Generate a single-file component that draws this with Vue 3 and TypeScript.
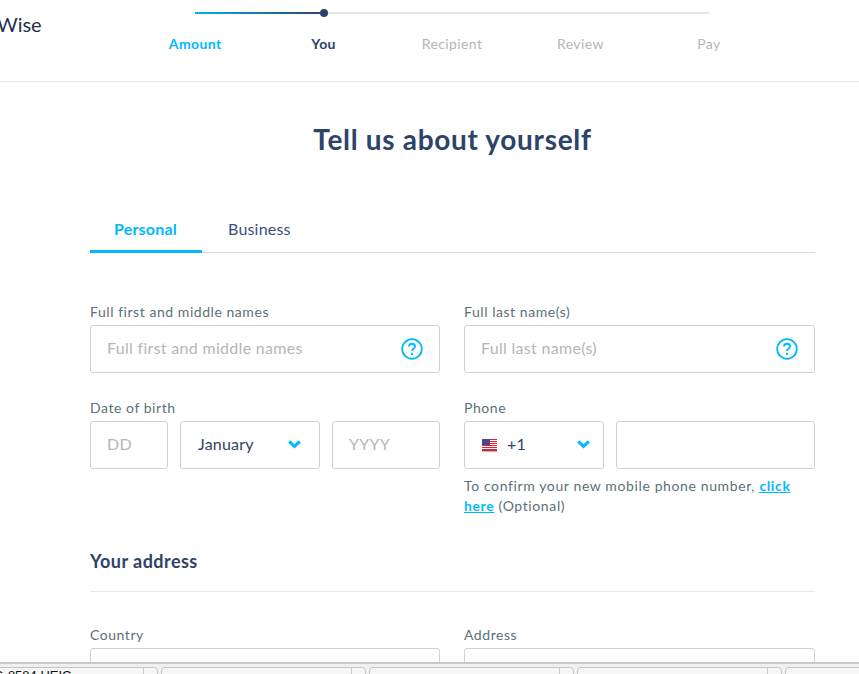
<script setup lang="ts">
const steps = [
  { label: 'Amount', state: 'done' },
  { label: 'You', state: 'active' },
  { label: 'Recipient', state: '' },
  { label: 'Review', state: '' },
  { label: 'Pay', state: '' },
]
const downloads = [0, 1, 2, 3, 4]
const stripes = [0, 1, 2, 3, 4, 5]
</script>

<template>
  <div class="page">
    <header class="top">
      <div class="logo">Wise</div>
      <div class="stepper">
        <div class="track">
          <div class="progress"></div>
          <div class="dot"></div>
        </div>
        <div class="labels">
          <span v-for="s in steps" :key="s.label" class="step" :class="s.state">{{ s.label }}</span>
        </div>
      </div>
    </header>

    <main class="content">
      <h1>Tell us about yourself</h1>
      <nav class="tabs">
        <span class="tab on">Personal</span>
        <span class="tab">Business</span>
      </nav>

      <div class="row first">
        <div class="field">
          <label>Full first and middle names</label>
          <div class="box hinted">
            <span class="ph">Full first and middle names</span>
            <svg class="help" width="22" height="22" viewBox="0 0 22 22" fill="none">
              <circle cx="11" cy="11" r="9.8" stroke="#00b9ff" stroke-width="1.8" />
              <path d="M8 8.6c0-1.8 1.3-2.9 3-2.9s3 1.1 3 2.7c0 2.3-3 2.4-3 4.6" stroke="#00b9ff" stroke-width="1.9" fill="none" />
              <circle cx="11" cy="15.9" r="1.2" fill="#00b9ff" />
            </svg>
          </div>
        </div>
        <div class="field">
          <label>Full last name(s)</label>
          <div class="box hinted">
            <span class="ph">Full last name(s)</span>
            <svg class="help" width="22" height="22" viewBox="0 0 22 22" fill="none">
              <circle cx="11" cy="11" r="9.8" stroke="#00b9ff" stroke-width="1.8" />
              <path d="M8 8.6c0-1.8 1.3-2.9 3-2.9s3 1.1 3 2.7c0 2.3-3 2.4-3 4.6" stroke="#00b9ff" stroke-width="1.9" fill="none" />
              <circle cx="11" cy="15.9" r="1.2" fill="#00b9ff" />
            </svg>
          </div>
        </div>
      </div>

      <div class="row second">
        <div class="field">
          <label>Date of birth</label>
          <div class="dob">
            <div class="box small"><span class="ph">DD</span></div>
            <div class="box select month">
              <span class="val">January</span>
              <svg class="chev" width="13" height="9" viewBox="0 0 13 9"><path d="M1.2 1.4 6.5 6.4l5.3-5" fill="none" stroke="#00b9ff" stroke-width="3" /></svg>
            </div>
            <div class="box small"><span class="ph">YYYY</span></div>
          </div>
        </div>
        <div class="field">
          <label>Phone</label>
          <div class="phone">
            <div class="box select code">
              <span class="flagval">
                <svg class="flag" width="15" height="12" viewBox="0 0 15 12">
                  <rect width="15" height="12" fill="#fff" />
                  <rect v-for="n in stripes" :key="n" :y="n * 2" width="15" height="1" fill="#e0202c" />
                  <rect y="11" width="15" height="1" fill="#e0202c" />
                  <rect width="8" height="6" fill="#47478f" />
                </svg>
                <span class="val">+1</span>
              </span>
              <svg class="chev" width="13" height="9" viewBox="0 0 13 9"><path d="M1.2 1.4 6.5 6.4l5.3-5" fill="none" stroke="#00b9ff" stroke-width="3" /></svg>
            </div>
            <div class="box grow"></div>
          </div>
          <p class="note">To confirm your new mobile phone number, <a>click here</a> (Optional)</p>
        </div>
      </div>

      <h2>Your address</h2>
      <div class="row third">
        <div class="field">
          <label>Country</label>
          <div class="box"></div>
        </div>
        <div class="field">
          <label>Address</label>
          <div class="box"></div>
        </div>
      </div>
    </main>

    <div class="downloads">
      <div v-for="i in downloads" :key="i" class="dl">
        <span v-if="i === 0" class="dl-name">IMG-8584.HEIC</span>
        <span class="dl-btn"></span>
      </div>
    </div>
  </div>
</template>

<style scoped>
.page {
  position: relative;
  width: 859px;
  height: 674px;
  overflow: hidden;
  background: #fff;
  font-family: Lato, "Open Sans", sans-serif;
  color: #2e4369;
}
.top {
  height: 81px;
  border-bottom: 1px solid #e4e6e8;
  display: flex;
  align-items: flex-start;
}
.logo {
  width: 198px;
  margin-left: -3px;
  padding-top: 12px;
  flex: none;
  font-size: 20px;
  line-height: 25px;
  color: #25304f;
}
.stepper {
  width: 514px;
  padding-top: 12px;
}
.track {
  position: relative;
  height: 2px;
  background: #e2e6e9;
  border-radius: 1px;
}
.progress {
  position: absolute;
  left: 0;
  top: 0;
  width: 129px;
  height: 2px;
  background: linear-gradient(90deg, #00b0f0, #2e4369);
}
.dot {
  position: absolute;
  left: 125px;
  top: -3px;
  width: 8px;
  height: 8px;
  border-radius: 50%;
  background: #2e4369;
}
.labels {
  display: flex;
  justify-content: space-between;
  margin: 20px -64px 0;
}
.step {
  width: 128.5px;
  text-align: center;
  font-size: 14px;
  line-height: 20px;
  letter-spacing: 0.4px;
  color: #b3b6b8;
}
.step.done {
  color: #00b9ff;
  font-weight: 700;
}
.step.active {
  color: #2e4369;
  font-weight: 700;
}
.content {
  padding: 0 44px 0 90px;
}
h1 {
  margin: 39px 0 0;
  font-size: 28px;
  line-height: 36px;
  font-weight: 700;
  letter-spacing: 0.68px;
  text-align: center;
  color: #2e4369;
}
.tabs {
  margin-top: 57px;
  height: 38px;
  display: flex;
  border-bottom: 1px solid #d5d7d9;
}
.tab {
  padding: 3px 24px 0;
  font-size: 16px;
  line-height: 24px;
  height: 35px;
  letter-spacing: 0.2px;
  color: #37517e;
}
.tab.on {
  width: 64px;
  color: #00b9ff;
  font-weight: 700;
  border-bottom: 3px solid #00b9ff;
  height: 33px;
}
.tab:not(.on) {
  padding-left: 26px;
}
.row {
  display: grid;
  grid-template-columns: 350px 351px;
  column-gap: 24px;
}
.row.first {
  margin-top: 49px;
}
.row.second {
  margin-top: 25px;
}
.row.third {
  margin-top: 33px;
}
.field label {
  display: block;
  height: 23px;
  font-size: 14px;
  line-height: 20px;
  letter-spacing: 0.55px;
  color: #5d7079;
}
.box {
  box-sizing: border-box;
  height: 48px;
  border: 1px solid #cfd2d4;
  border-radius: 3px;
  display: flex;
  align-items: center;
  justify-content: space-between;
  background: #fff;
}
.hinted {
  padding: 0 16px;
}
.ph {
  margin-bottom: 4px;
  font-size: 16px;
  letter-spacing: 0.3px;
  color: #b3b6b8;
}
.dob,
.phone {
  display: flex;
  gap: 12px;
}
.small {
  width: 78px;
  padding-left: 16px;
  justify-content: flex-start;
}
.dob .small:last-child {
  width: 108px;
}
.select {
  width: 140px;
  padding: 0 13px 0 17px;
}
.month {
  padding-right: 18px;
}
.val {
  margin-bottom: 4px;
  font-size: 16px;
  letter-spacing: 0.2px;
  color: #2e4369;
}
.flagval {
  display: flex;
  align-items: center;
  gap: 10px;
}
.flag {
  filter: drop-shadow(0 1px 0.5px #bbb);
}
.chev {
  display: block;
  margin-bottom: 2px;
}
.grow {
  flex: 1;
}
.note {
  margin: 7px 0 0;
  font-size: 14px;
  line-height: 20px;
  letter-spacing: 0.62px;
  color: #5d7079;
}
.note a {
  color: #00b9ff;
  font-weight: 700;
  text-decoration: underline;
}
h2 {
  margin: 33px 0 0;
  padding-bottom: 18px;
  border-bottom: 1px solid #e4e6e8;
  font-size: 18px;
  line-height: 24px;
  font-weight: 700;
  letter-spacing: 0.45px;
  color: #2e4369;
}
.downloads {
  position: absolute;
  left: 0;
  right: 0;
  bottom: 0;
  height: 12px;
  box-sizing: border-box;
  padding: 3px 0 0 0;
  border-top: 2px solid #c9c9c9;
  background: #f0f0f0;
  display: flex;
  gap: 3px;
  overflow: hidden;
}
.dl {
  position: relative;
  flex: none;
  width: 205px;
  height: 20px;
  box-sizing: border-box;
  border: 1px solid #c4c4c4;
  border-radius: 4px;
  background: #f6f6f6;
}
.dl:first-child {
  margin-left: -47px;
}
.dl-name {
  position: absolute;
  left: 25px;
  top: 0;
  font-family: "Liberation Sans", sans-serif;
  font-size: 13px;
  line-height: 15px;
  color: #111;
  white-space: nowrap;
}
.dl-btn {
  position: absolute;
  right: 13px;
  top: 0;
  bottom: 0;
  border-left: 1px solid #c9c9c9;
}
</style>
